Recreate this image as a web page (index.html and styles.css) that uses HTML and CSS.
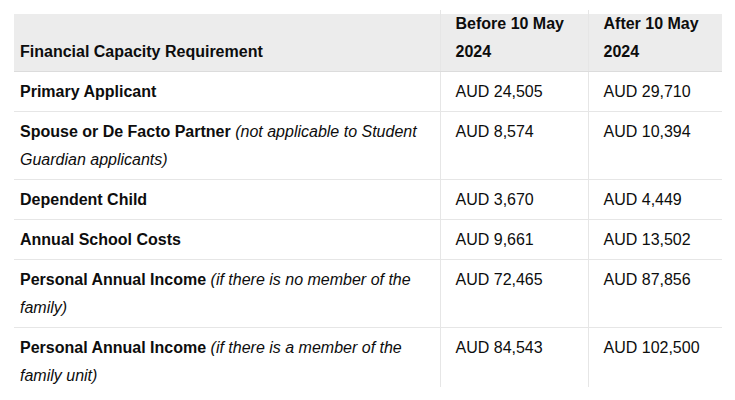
FILE: index.html
```html
<!DOCTYPE html>
<html lang="en">
<head>
<meta charset="utf-8">
<title>Financial Capacity Requirement</title>
<link rel="stylesheet" href="styles.css">
</head>
<body>
<div class="viewport">
  <table class="fc-table">
    <colgroup>
      <col class="col-req">
      <col class="col-before">
      <col class="col-after">
    </colgroup>
    <thead>
      <tr>
        <th>Financial Capacity Requirement</th>
        <th>Before 10 May 2024</th>
        <th>After 10 May 2024</th>
      </tr>
    </thead>
    <tbody>
      <tr>
        <td><strong>Primary Applicant</strong></td>
        <td>AUD 24,505</td>
        <td>AUD 29,710</td>
      </tr>
      <tr>
        <td><strong>Spouse or De Facto Partner</strong> <em>(not applicable to Student Guardian applicants)</em></td>
        <td>AUD 8,574</td>
        <td>AUD 10,394</td>
      </tr>
      <tr>
        <td><strong>Dependent Child</strong></td>
        <td>AUD 3,670</td>
        <td>AUD 4,449</td>
      </tr>
      <tr>
        <td><strong>Annual School Costs</strong></td>
        <td>AUD 9,661</td>
        <td>AUD 13,502</td>
      </tr>
      <tr>
        <td><strong>Personal Annual Income</strong> <em>(if there is no member of the family)</em></td>
        <td>AUD 72,465</td>
        <td>AUD 87,856</td>
      </tr>
      <tr>
        <td><strong>Personal Annual Income</strong> <em>(if there is a member of the family unit)</em></td>
        <td>AUD 84,543</td>
        <td>AUD 102,500</td>
      </tr>
    </tbody>
  </table>
</div>
</body>
</html>
```

FILE: styles.css
```css
html, body {
  margin: 0;
  padding: 0;
  background: #ffffff;
}

body {
  font-family: "Liberation Sans", Arial, sans-serif;
  font-size: 16px;
  line-height: 28px;
  color: #0d0d0d;
}

.viewport {
  box-sizing: border-box;
  height: 387px;
  padding: 10px 13px 0 14px;
  overflow: hidden;
}

.fc-table {
  width: 708px;
  border-collapse: collapse;
  table-layout: fixed;
}

.col-req { width: 426px; }
.col-before { width: 148px; }
.col-after { width: 134px; }

.fc-table th {
  font-weight: 700;
  text-align: left;
  vertical-align: bottom;
  padding: 0 16px 5px 15px;
  background: linear-gradient(to bottom, transparent 4px, #ececec 4px);
  border-bottom: 1px solid #dcdcdc;
}

.fc-table td {
  text-align: left;
  vertical-align: top;
  padding: 6px 16px 5px 15px;
  border-bottom: 1px solid #e6e6e6;
}

.fc-table th + th,
.fc-table td + td {
  border-left: 1px solid #e6e6e6;
}

.fc-table th:first-child,
.fc-table td:first-child {
  padding-left: 6px;
  padding-right: 14px;
}

.fc-table strong {
  font-weight: 700;
}

.fc-table em {
  font-style: italic;
  font-weight: 400;
}
```
